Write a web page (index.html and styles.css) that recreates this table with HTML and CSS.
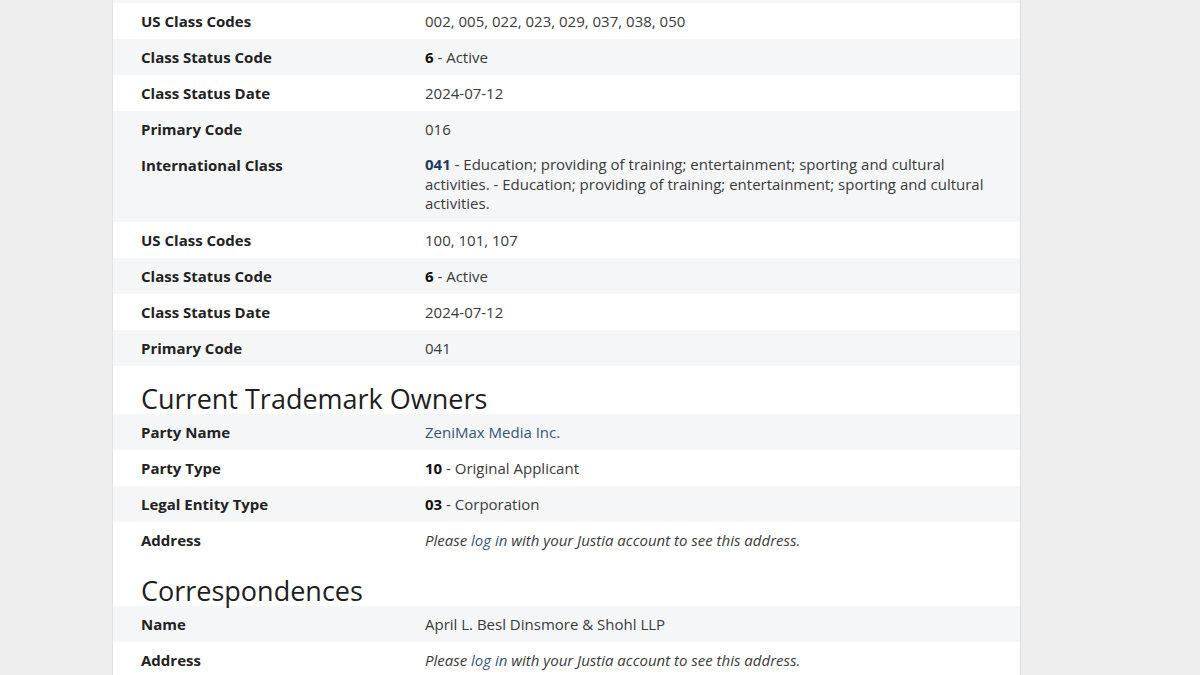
FILE: index.html
```html
<!DOCTYPE html>
<html lang="en">
<head>
<meta charset="utf-8">
<title>Trademark details</title>
<link rel="stylesheet" href="styles.css">
</head>
<body>
<main class="page">
  <div class="scroll-edge"></div>
  <section class="table">
    <div class="row"><div class="label">US Class Codes</div><div class="value">002, 005, 022, 023, 029, 037, 038, 050</div></div>
    <div class="row striped"><div class="label">Class Status Code</div><div class="value"><b>6</b> - Active</div></div>
    <div class="row"><div class="label">Class Status Date</div><div class="value">2024-07-12</div></div>
    <div class="row striped"><div class="label">Primary Code</div><div class="value">016</div></div>
  </section>
  <section class="table">
    <div class="row striped multi"><div class="label">International Class</div><div class="value"><a class="code" href="#">041</a> - Education; providing of training; entertainment; sporting and cultural activities. - Education; providing of training; entertainment; sporting and cultural activities.</div></div>
    <div class="row"><div class="label">US Class Codes</div><div class="value">100, 101, 107</div></div>
    <div class="row striped"><div class="label">Class Status Code</div><div class="value"><b>6</b> - Active</div></div>
    <div class="row"><div class="label">Class Status Date</div><div class="value">2024-07-12</div></div>
    <div class="row striped"><div class="label">Primary Code</div><div class="value">041</div></div>
  </section>

  <h2 class="heading">Current Trademark Owners</h2>
  <section class="table">
    <div class="row striped"><div class="label">Party Name</div><div class="value"><a class="link" href="#">ZeniMax Media Inc.</a></div></div>
    <div class="row"><div class="label">Party Type</div><div class="value"><b>10</b> - Original Applicant</div></div>
    <div class="row striped"><div class="label">Legal Entity Type</div><div class="value"><b>03</b> - Corporation</div></div>
    <div class="row"><div class="label">Address</div><div class="value note">Please <a class="link" href="#">log in</a> with your Justia account to see this address.</div></div>
  </section>

  <h2 class="heading">Correspondences</h2>
  <section class="table">
    <div class="row striped"><div class="label">Name</div><div class="value">April L. Besl Dinsmore &amp; Shohl LLP</div></div>
    <div class="row"><div class="label">Address</div><div class="value note">Please <a class="link" href="#">log in</a> with your Justia account to see this address.</div></div>
  </section>
</main>
</body>
</html>
```
FILE: styles.css
```css
html, body {
  margin: 0;
  padding: 0;
  background: #eeeeee;
  font-family: "Open Sans", "Noto Sans", sans-serif;
  font-size: 15px;
  color: #333333;
}

.page {
  width: 907px;
  margin-left: 112px;
  min-height: 675px;
  background: #ffffff;
  border-left: 1px solid #e2e2e2;
  border-right: 1px solid #dcdcdc;
}

.scroll-edge {
  height: 3px;
  background: #f5f6f8;
}

.row {
  display: grid;
  grid-template-columns: 284px 1fr;
  padding: 8px 28px;
  line-height: 20px;
}

.row.multi .value {
  line-height: 19.67px;
}

.row.striped {
  background: #f5f6f8;
}

.label {
  font-weight: 700;
  color: #222222;
}

.value {
  color: #3a3a3a;
}

.value b {
  color: #111111;
  font-weight: 700;
}

.code {
  color: #1d3a5e;
  font-weight: 700;
  text-decoration: none;
}

.link {
  color: #34557a;
  text-decoration: none;
}

.note {
  font-style: italic;
}

.heading {
  margin: 0;
  padding: 17px 28px 0;
  font-size: 27px;
  line-height: 31px;
  font-weight: 400;
  color: #1e1e1e;
}
```
